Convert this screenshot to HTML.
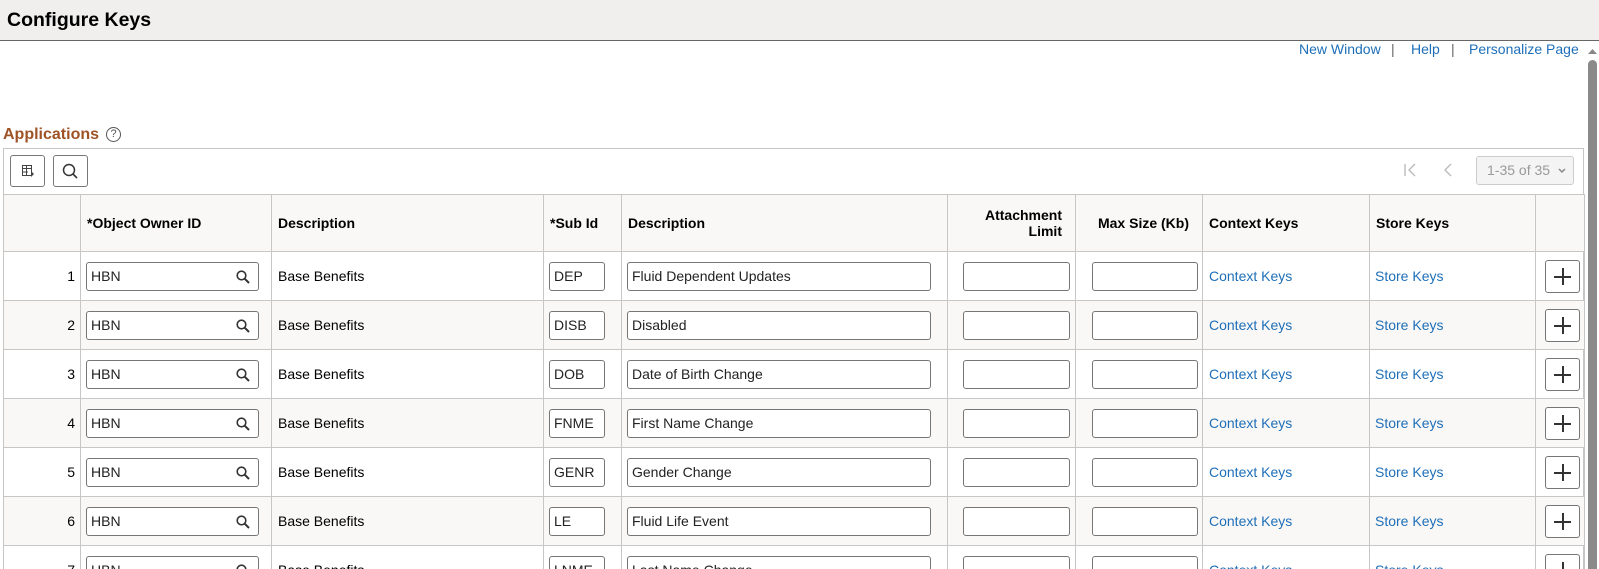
<!DOCTYPE html>
<html style="width:1599px;height:569px;overflow:hidden"><head><style>
*{box-sizing:border-box;margin:0;padding:0}
html,body{width:1599px;height:569px;overflow:hidden}
body{background:#fff;font-family:"Liberation Sans",Arial,sans-serif;font-size:14px;color:#000}
#w{position:relative;width:1599px;height:569px;overflow:hidden}
.hdr{position:absolute;left:0;top:0;width:1599px;height:41px;background:#f0efee;border-bottom:1px solid #666}
.hdr h1{position:absolute;left:7px;top:9px;font-size:19.5px;font-weight:bold;color:#000}
.tl{position:absolute;top:41px;font-size:14px;color:#1e6fb8}
.sep{position:absolute;top:41px;color:#666;font-size:14px}
.app{position:absolute;left:3px;top:126px;font-size:16px;font-weight:bold;color:#9e5326}
.q{position:absolute;left:106px;top:127px;width:15px;height:15px;border:1px solid #555;border-radius:50%;font-size:11px;text-align:center;line-height:13px;color:#555}
.box{position:absolute;left:3px;top:148px;width:1581px;height:500px;border:1px solid #c8c6c4}
.btn{position:absolute;top:155px;width:35px;height:32px;border:1px solid #777;border-radius:3px;background:#fff}
table{position:absolute;left:3px;top:194px;border-collapse:collapse;table-layout:fixed;width:1581px}
td,th{border:1px solid #c8c6c4;padding:0;vertical-align:middle}
th{height:57px;background:#f9f8f7;font-weight:bold;text-align:left;padding-left:6px;font-size:14px}
tr.r td{height:49px}
tr.g td{background:#f9f8f7}
.inp{position:relative;height:29px;border:1px solid #767676;border-radius:3px;background:#fff;color:#222;padding-left:4px;line-height:27px}
.num{text-align:right;padding-right:5px}
a{color:#1e6fb8;text-decoration:none}
.plus{width:35px;height:33px;border:1px solid #767676;border-radius:3px;margin-left:9px;position:relative;background:#fff}
.plus:before{content:"";position:absolute;left:8px;top:15px;width:17px;height:2px;background:#333}
.plus:after{content:"";position:absolute;left:16px;top:7px;width:2px;height:17px;background:#333}
</style></head><body><div id="w">
<div class="hdr"><h1>Configure Keys</h1></div>
<span class="tl" style="left:1299px">New Window</span><span class="sep" style="left:1391px">|</span>
<span class="tl" style="left:1411px">Help</span><span class="sep" style="left:1451px">|</span>
<span class="tl" style="left:1469px">Personalize Page</span>
<svg style="position:absolute;left:1588px;top:48px" width="9" height="7"><path d="M0 6 L4.5 1 L9 6Z" fill="#888"/></svg>
<div style="position:absolute;left:1588px;top:60px;width:9px;height:520px;background:#8a8a8a;border-radius:5px"></div>
<div class="app">Applications</div><div class="q">?</div>
<div class="box"></div>
<div class="btn" style="left:10px"><svg width="33" height="30"><g fill="none" stroke="#444" stroke-width="1"><rect x="11.5" y="9.5" width="9" height="10"/><line x1="11.5" y1="12.5" x2="20.5" y2="12.5"/><line x1="11.5" y1="16" x2="17" y2="16"/><line x1="15.5" y1="9.5" x2="15.5" y2="19.5"/></g><path d="M20 15 L23 18 L20 21Z" fill="#444"/></svg></div>
<div class="btn" style="left:53px"><svg width="33" height="30"><circle cx="15" cy="14" r="5.5" fill="none" stroke="#333" stroke-width="1.5"/><line x1="19" y1="18" x2="23" y2="22" stroke="#333" stroke-width="1.6"/></svg></div>
<svg style="position:absolute;left:1403px;top:162px" width="14" height="16"><g stroke="#bbb" stroke-width="1.4" fill="none"><line x1="2" y1="2" x2="2" y2="14"/><path d="M12 2 L6 8 L12 14"/></g></svg>
<svg style="position:absolute;left:1443px;top:162px" width="10" height="16"><path d="M8 2 L2 8 L8 14" stroke="#bbb" stroke-width="1.4" fill="none"/></svg>
<div style="position:absolute;left:1476px;top:156px;width:98px;height:29px;border:1px solid #ccc;border-radius:3px;background:#f4f4f4;color:#999;font-size:14px;line-height:27px;padding-left:10px">1-35 of 35<svg style="position:absolute;right:7px;top:11px" width="8" height="6"><path d="M1 1 L4 4 L7 1" stroke="#888" stroke-width="1.5" fill="none"/></svg></div>
<table>
<colgroup><col style="width:77px"><col style="width:191px"><col style="width:272px"><col style="width:78px"><col style="width:326px"><col style="width:128px"><col style="width:127px"><col style="width:167px"><col style="width:166px"><col style="width:49px"></colgroup>
<tr><th></th><th>*Object Owner ID</th><th>Description</th><th>*Sub Id</th><th>Description</th><th style="text-align:right;padding-right:13px;line-height:16px">Attachment<br>Limit</th><th style="text-align:right;padding-right:13px">Max Size (Kb)</th><th>Context Keys</th><th>Store Keys</th><th></th></tr>
<tr class="r"><td class="num">1</td><td><div class="inp" style="margin:0 12px 0 5px">HBN<svg style="position:absolute;right:8px;top:7px" width="14" height="14"><circle cx="5.5" cy="5.5" r="4.3" fill="none" stroke="#333" stroke-width="1.6"/><line x1="8.7" y1="8.7" x2="13" y2="13" stroke="#333" stroke-width="2"/></svg></div></td><td style="padding-left:6px">Base Benefits</td><td><div class="inp" style="margin:0 16px 0 5px">DEP</div></td><td><div class="inp" style="margin:0 16px 0 5px">Fluid Dependent Updates</div></td><td><div class="inp" style="margin:0 5px 0 15px"></div></td><td><div class="inp" style="margin:0 4px 0 16px"></div></td><td style="padding-left:6px"><a>Context Keys</a></td><td style="padding-left:5px"><a>Store Keys</a></td><td><div class="plus"></div></td></tr>
<tr class="r g"><td class="num">2</td><td><div class="inp" style="margin:0 12px 0 5px">HBN<svg style="position:absolute;right:8px;top:7px" width="14" height="14"><circle cx="5.5" cy="5.5" r="4.3" fill="none" stroke="#333" stroke-width="1.6"/><line x1="8.7" y1="8.7" x2="13" y2="13" stroke="#333" stroke-width="2"/></svg></div></td><td style="padding-left:6px">Base Benefits</td><td><div class="inp" style="margin:0 16px 0 5px">DISB</div></td><td><div class="inp" style="margin:0 16px 0 5px">Disabled</div></td><td><div class="inp" style="margin:0 5px 0 15px"></div></td><td><div class="inp" style="margin:0 4px 0 16px"></div></td><td style="padding-left:6px"><a>Context Keys</a></td><td style="padding-left:5px"><a>Store Keys</a></td><td><div class="plus"></div></td></tr>
<tr class="r"><td class="num">3</td><td><div class="inp" style="margin:0 12px 0 5px">HBN<svg style="position:absolute;right:8px;top:7px" width="14" height="14"><circle cx="5.5" cy="5.5" r="4.3" fill="none" stroke="#333" stroke-width="1.6"/><line x1="8.7" y1="8.7" x2="13" y2="13" stroke="#333" stroke-width="2"/></svg></div></td><td style="padding-left:6px">Base Benefits</td><td><div class="inp" style="margin:0 16px 0 5px">DOB</div></td><td><div class="inp" style="margin:0 16px 0 5px">Date of Birth Change</div></td><td><div class="inp" style="margin:0 5px 0 15px"></div></td><td><div class="inp" style="margin:0 4px 0 16px"></div></td><td style="padding-left:6px"><a>Context Keys</a></td><td style="padding-left:5px"><a>Store Keys</a></td><td><div class="plus"></div></td></tr>
<tr class="r g"><td class="num">4</td><td><div class="inp" style="margin:0 12px 0 5px">HBN<svg style="position:absolute;right:8px;top:7px" width="14" height="14"><circle cx="5.5" cy="5.5" r="4.3" fill="none" stroke="#333" stroke-width="1.6"/><line x1="8.7" y1="8.7" x2="13" y2="13" stroke="#333" stroke-width="2"/></svg></div></td><td style="padding-left:6px">Base Benefits</td><td><div class="inp" style="margin:0 16px 0 5px">FNME</div></td><td><div class="inp" style="margin:0 16px 0 5px">First Name Change</div></td><td><div class="inp" style="margin:0 5px 0 15px"></div></td><td><div class="inp" style="margin:0 4px 0 16px"></div></td><td style="padding-left:6px"><a>Context Keys</a></td><td style="padding-left:5px"><a>Store Keys</a></td><td><div class="plus"></div></td></tr>
<tr class="r"><td class="num">5</td><td><div class="inp" style="margin:0 12px 0 5px">HBN<svg style="position:absolute;right:8px;top:7px" width="14" height="14"><circle cx="5.5" cy="5.5" r="4.3" fill="none" stroke="#333" stroke-width="1.6"/><line x1="8.7" y1="8.7" x2="13" y2="13" stroke="#333" stroke-width="2"/></svg></div></td><td style="padding-left:6px">Base Benefits</td><td><div class="inp" style="margin:0 16px 0 5px">GENR</div></td><td><div class="inp" style="margin:0 16px 0 5px">Gender Change</div></td><td><div class="inp" style="margin:0 5px 0 15px"></div></td><td><div class="inp" style="margin:0 4px 0 16px"></div></td><td style="padding-left:6px"><a>Context Keys</a></td><td style="padding-left:5px"><a>Store Keys</a></td><td><div class="plus"></div></td></tr>
<tr class="r g"><td class="num">6</td><td><div class="inp" style="margin:0 12px 0 5px">HBN<svg style="position:absolute;right:8px;top:7px" width="14" height="14"><circle cx="5.5" cy="5.5" r="4.3" fill="none" stroke="#333" stroke-width="1.6"/><line x1="8.7" y1="8.7" x2="13" y2="13" stroke="#333" stroke-width="2"/></svg></div></td><td style="padding-left:6px">Base Benefits</td><td><div class="inp" style="margin:0 16px 0 5px">LE</div></td><td><div class="inp" style="margin:0 16px 0 5px">Fluid Life Event</div></td><td><div class="inp" style="margin:0 5px 0 15px"></div></td><td><div class="inp" style="margin:0 4px 0 16px"></div></td><td style="padding-left:6px"><a>Context Keys</a></td><td style="padding-left:5px"><a>Store Keys</a></td><td><div class="plus"></div></td></tr>
<tr class="r"><td class="num">7</td><td><div class="inp" style="margin:0 12px 0 5px">HBN<svg style="position:absolute;right:8px;top:7px" width="14" height="14"><circle cx="5.5" cy="5.5" r="4.3" fill="none" stroke="#333" stroke-width="1.6"/><line x1="8.7" y1="8.7" x2="13" y2="13" stroke="#333" stroke-width="2"/></svg></div></td><td style="padding-left:6px">Base Benefits</td><td><div class="inp" style="margin:0 16px 0 5px">LNME</div></td><td><div class="inp" style="margin:0 16px 0 5px">Last Name Change</div></td><td><div class="inp" style="margin:0 5px 0 15px"></div></td><td><div class="inp" style="margin:0 4px 0 16px"></div></td><td style="padding-left:6px"><a>Context Keys</a></td><td style="padding-left:5px"><a>Store Keys</a></td><td><div class="plus"></div></td></tr>
</table>
</div></body></html>
